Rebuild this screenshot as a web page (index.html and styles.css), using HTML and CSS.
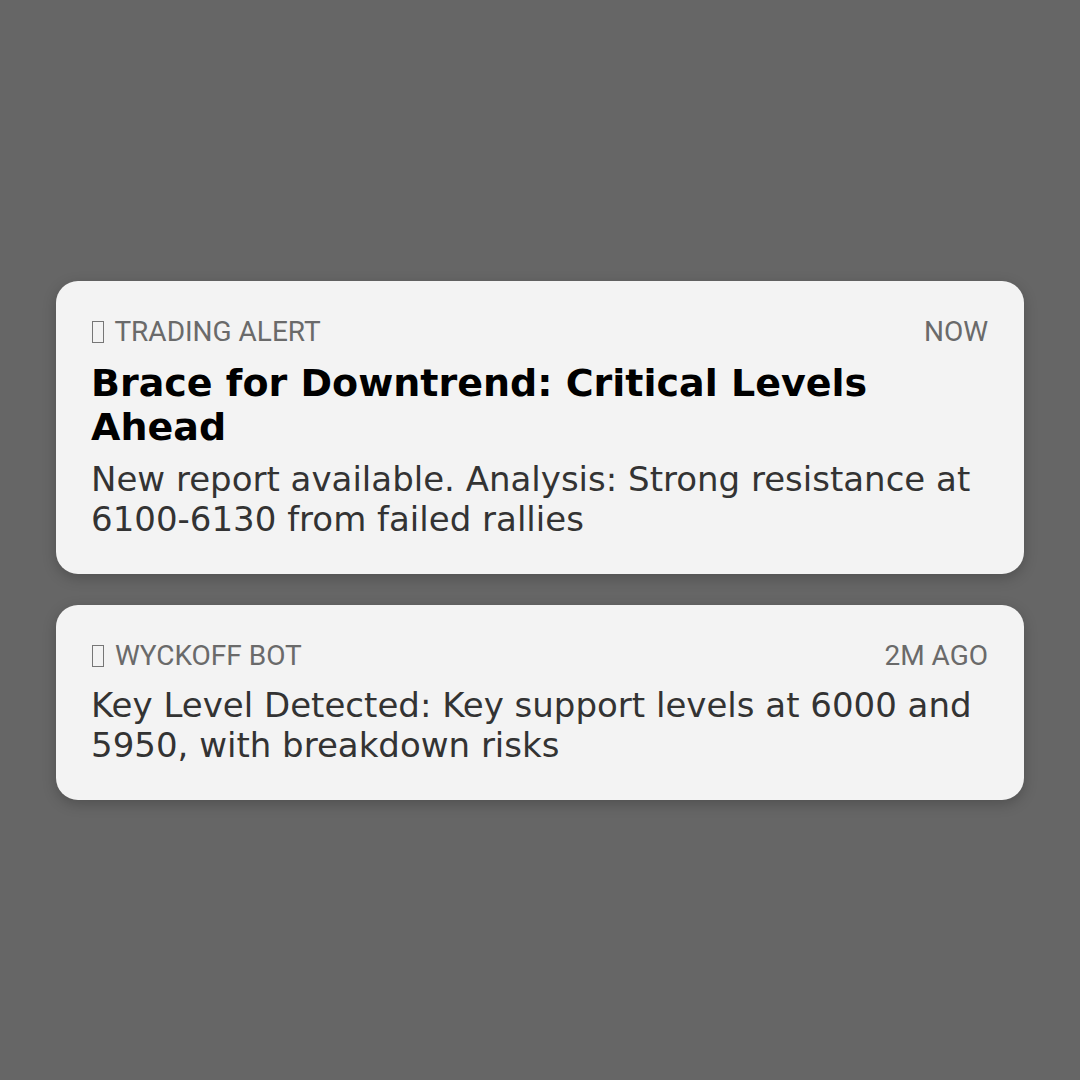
FILE: index.html
```html
<!DOCTYPE html>
<html lang="en">
<head>
<meta charset="utf-8">
<title>Notifications</title>
<link rel="stylesheet" href="styles.css">
</head>
<body>
<main class="stack">
  <section class="card">
    <div class="card-head">
      <span class="app"><span class="tofu" aria-hidden="true"></span> TRADING ALERT</span>
      <span class="time">NOW</span>
    </div>
    <h1 class="title">Brace for Downtrend: Critical Levels Ahead</h1>
    <p class="body">New report available. Analysis: Strong resistance at 6100-6130 from failed rallies</p>
  </section>
  <section class="card">
    <div class="card-head">
      <span class="app"><span class="tofu" aria-hidden="true"></span> WYCKOFF BOT</span>
      <span class="time">2M AGO</span>
    </div>
    <p class="body">Key Level Detected: Key support levels at 6000 and 5950, with breakdown risks</p>
  </section>
</main>
</body>
</html>
```
FILE: styles.css
```css
html, body {
  margin: 0;
  padding: 0;
  height: 100%;
}
body {
  background: #666666;
  font-family: "DejaVu Sans", sans-serif;
}
.stack {
  box-sizing: border-box;
  min-height: 100%;
  padding: 0 56px;
  display: flex;
  flex-direction: column;
  justify-content: center;
  gap: 31px;
}
.card {
  background: #f3f3f3;
  border-radius: 22px;
  padding: 34px 36px 35px 35px;
  box-shadow: 0 4px 14px rgba(0, 0, 0, 0.22);
}
.card-head {
  display: flex;
  justify-content: space-between;
  align-items: baseline;
  font-family: Roboto, sans-serif;
  font-size: 28px;
  color: #6a6a6a;
  margin-bottom: 13px;
}
.tofu {
  display: inline-block;
  box-sizing: border-box;
  width: 12px;
  height: 22px;
  margin-left: 1px;
  margin-right: 4px;
  border: 1.5px solid #767676;
  vertical-align: -2px;
}
.title {
  margin: 0 0 10px;
  font-family: "DejaVu Sans", sans-serif;
  font-weight: bold;
  font-size: 38px;
  color: #000;
}
.body {
  margin: 0;
  font-size: 34px;
  color: #333333;
}
```
